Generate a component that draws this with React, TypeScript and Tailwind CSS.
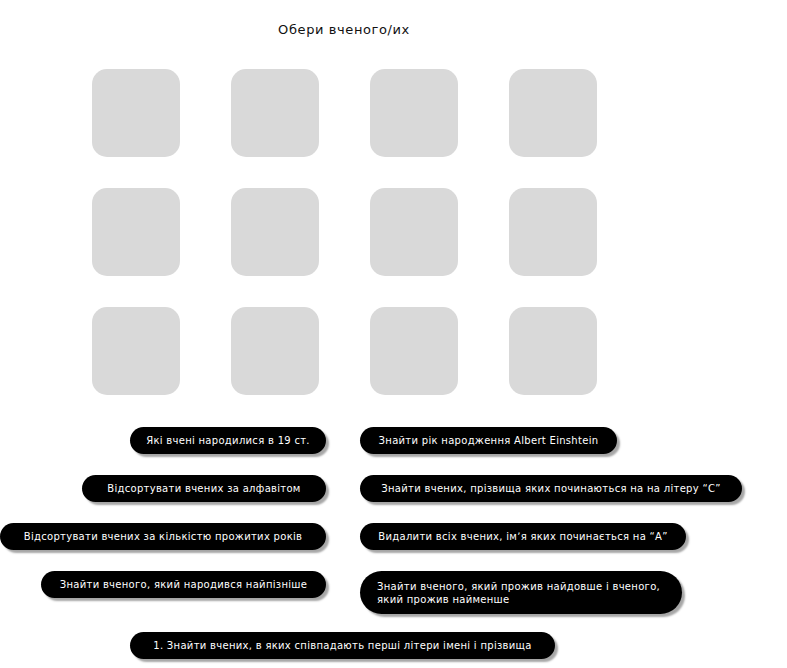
import React from 'react';

const tiles = Array.from({ length: 12 }, (_, i) => i);

const Pill: React.FC<{ className: string; children: React.ReactNode }> = ({ className, children }) => (
  <button
    className={`flex items-center rounded-full bg-black text-white text-[10px] leading-[13px] tracking-[0.3px] shadow-[3px_3px_2px_rgba(0,0,0,0.35)] ${className}`}
  >
    {children}
  </button>
);

const App: React.FC = () => {
  return (
    <div className="w-[688px] bg-white flex flex-col items-center pt-[21px] pb-[7px]" style={{ fontFamily: '"DejaVu Sans", "Open Sans", sans-serif' }}>
      <h1 className="text-[13px] text-[#111] leading-[18px] font-normal tracking-[0.6px]">Обери вченого/их</h1>

      <div className="grid grid-cols-4 gap-x-[51px] gap-y-[31px] mt-[30px]">
        {tiles.map((i) => (
          <div key={i} className="w-[88px] h-[88px] rounded-[15px] bg-[#d9d9d9]" />
        ))}
      </div>

      <div className="w-full grid grid-cols-[326px_1fr] gap-x-[34px] gap-y-[21px] mt-[32px] items-start">
        <div className="flex justify-end">
          <Pill className="w-[196px] h-[27px] justify-center">Які вчені народилися в 19 ст.</Pill>
        </div>
        <div className="flex">
          <Pill className="w-[257px] h-[27px] justify-center">Знайти рік народження Albert Einshtein</Pill>
        </div>

        <div className="flex justify-end">
          <Pill className="w-[244px] h-[27px] justify-center">Відсортувати вчених за алфавітом</Pill>
        </div>
        <div className="flex">
          <Pill className="w-[382px] h-[27px] justify-center">Знайти вчених, прізвища яких починаються на на літеру “С”</Pill>
        </div>

        <div className="flex justify-end">
          <Pill className="w-[326px] h-[27px] justify-center">Відсортувати вчених за кількістю прожитих років</Pill>
        </div>
        <div className="flex">
          <Pill className="w-[326px] h-[27px] justify-center">Видалити всіх вчених, імʼя яких починається на “А”</Pill>
        </div>

        <div className="flex justify-end">
          <Pill className="w-[285px] h-[27px] justify-center">Знайти вченого, який народився найпізніше</Pill>
        </div>
        <div className="flex">
          <Pill className="w-[322px] h-[43px] rounded-[16px] px-[17px] text-left">
            Знайти вченого, який прожив найдовше і вченого, який прожив найменше
          </Pill>
        </div>
      </div>

      <Pill className="self-start ml-[130px] w-[425px] h-[27px] justify-center mt-[18px]">
        1. Знайти вчених, в яких співпадають перші літери імені і прізвища
      </Pill>
    </div>
  );
};

export default App;
